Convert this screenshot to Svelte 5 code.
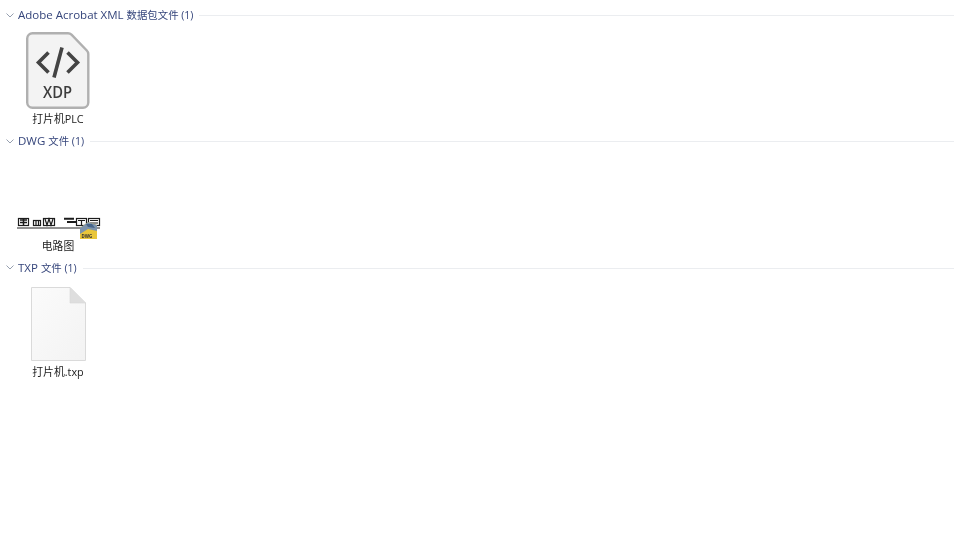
<script>
  const groups = [
    { latin: 'Adobe Acrobat XML ', cjk: '数据包文件', count: ' (1)', name: '打片机PLC', kind: 'xdp' },
    { latin: 'DWG ', cjk: '文件', count: ' (1)', name: '电路图', kind: 'dwg' },
    { latin: 'TXP ', cjk: '文件', count: ' (1)', name: '打片机.txp', kind: 'txp' }
  ];
</script>

<main class="view">
  {#each groups as g}
    <section class="group">
      <header class="head">
        <svg class="chev" width="8" height="5" viewBox="0 0 8 5"><path d="M0.5 0.5 L4 4 L7.5 0.5" fill="none" stroke="#8a94a6" stroke-width="0.9"/></svg>
        <span class="title">{g.latin}<span class="cjk">{g.cjk}</span><span class="count">{g.count}</span></span>
        <span class="rule"></span>
      </header>
      <div class="item">
        <div class="thumb">
          {#if g.kind === 'xdp'}
            <svg width="64" height="77" viewBox="0 0 64 77">
              <path d="M6.5 1.2 H42 Q44 1.2 45.5 2.7 L60.8 18.5 Q62.3 20 62.3 22 V70.5 a5.3 5.3 0 0 1 -5.3 5.3 H6.5 a5.3 5.3 0 0 1 -5.3 -5.3 V6.5 a5.3 5.3 0 0 1 5.3 -5.3 Z" fill="#f3f3f3" stroke="#b0b0b0" stroke-width="2.4"/>
              <g fill="none" stroke="#444" stroke-width="3.6">
                <path d="M22.5 20.5 L12.5 30.5 L22.5 40.5"/>
                <path d="M41.5 20.5 L51.5 30.5 L41.5 40.5"/>
                <path d="M36 15.5 L28 45.5"/>
              </g>
              <text class="xdp" x="17" y="66" textLength="29" lengthAdjust="spacingAndGlyphs">XDP</text>
            </svg>
          {:else if g.kind === 'dwg'}
            <svg class="dwg" width="88" height="77" viewBox="0 0 88 77">
              <g fill="none" stroke="#1c1c1c" stroke-width="1.2">
                <rect x="4.5" y="60.5" width="10" height="7"/>
                <path d="M6 62 H13 M9.5 61 V67 M6 64.5 H13" stroke-width="1.5"/>
                <rect x="19.5" y="62.5" width="7" height="5"/>
                <path d="M22 63 V67 M24.5 63 V67"/>
                <rect x="29.5" y="60.5" width="11" height="7"/>
                <path d="M31 61 L33 67 L35 61 L37 67 L39 61"/>
                <path d="M50 60.8 H60 M53 64 H62" stroke-width="2"/>
                <rect x="62.5" y="60.5" width="10" height="7"/>
                <path d="M64 62.5 H71 M67.5 62 V67"/>
                <rect x="74.5" y="60.5" width="11" height="7"/>
                <path d="M76 62.5 H84 M76 65 H84"/>
              </g>
              <path d="M3 70 H86" stroke="#222" stroke-width="1"/>
            </svg>
            <svg class="badge-icon" width="17" height="17" viewBox="0 0 17 17">
              <path d="M0 6 L8 0 L17 3 V17 H0 Z" fill="#e9c63a"/>
              <path d="M0 6 L8 0 L17 3 V9 L8 7 L0 12 Z" fill="#7d93ab"/>
              <path d="M6 2 L12 2 L15 6 L8 5 Z" fill="#45648a"/>
              <text class="badge" x="1.5" y="15.5">DWG</text>
            </svg>
          {:else}
            <svg width="55" height="74" viewBox="0 0 55 74">
              <defs>
                <linearGradient id="sheet" x1="0" y1="0" x2="1" y2="1">
                  <stop offset="0" stop-color="#fbfbfb"/>
                  <stop offset="1" stop-color="#f3f3f3"/>
                </linearGradient>
              </defs>
              <path d="M0.5 0.5 H39 L54.5 16 V73.5 H0.5 Z" fill="url(#sheet)" stroke="#dadada"/>
              <path d="M39 0.5 V16 H54.5 Z" fill="#dedede" stroke="#d6d6d6" stroke-width="0.6"/>
            </svg>
          {/if}
        </div>
        <div class="name">{g.name}</div>
      </div>
    </section>
  {/each}
</main>

<style>
  :global(body) {
    margin: 0;
    background: #fff;
  }
  .view {
    display: flex;
    flex-direction: column;
    padding: 6px 6px 0 5px;
    font-family: "Open Sans", "Noto Sans CJK SC", sans-serif;
    filter: blur(0.3px);
  }
  .group {
    display: flex;
    flex-direction: column;
    height: 126.4px;
  }
  .head {
    display: flex;
    align-items: center;
    height: 18px;
    gap: 6px;
    color: #35457b;
    font-size: 11.5px;
    line-height: 18px;
  }
  .chev {
    margin-left: 1px;
    margin-right: -2px;
    flex: none;
  }
  .title {
    white-space: pre;
  }
  .cjk {
    font-size: 10.4px;
  }
  .count {
    font-size: 10.5px;
  }
  .rule {
    flex: 1;
    height: 1px;
    background: #ebedf0;
    margin-top: 1px;
  }
  .item {
    width: 96px;
    display: flex;
    flex-direction: column;
    align-items: center;
    margin-left: 5px;
  }
  .thumb {
    position: relative;
    height: 77.5px;
    margin-top: 7px;
    display: flex;
    align-items: flex-end;
    justify-content: center;
  }
  .thumb svg {
    display: block;
  }
  .badge-icon {
    position: absolute;
    left: 66px;
    bottom: -4.5px;
  }
  .xdp {
    font-family: "Open Sans", sans-serif;
    font-size: 16px;
    font-weight: 600;
    fill: #3d3d3d;
  }
  .badge {
    font-family: "Open Sans", sans-serif;
    font-size: 4.4px;
    font-weight: 700;
    fill: #333;
  }
  .name {
    font-size: 10.8px;
    line-height: 16px;
    color: #222;
    text-align: center;
    white-space: nowrap;
    margin-top: 2.8px;
  }
</style>
